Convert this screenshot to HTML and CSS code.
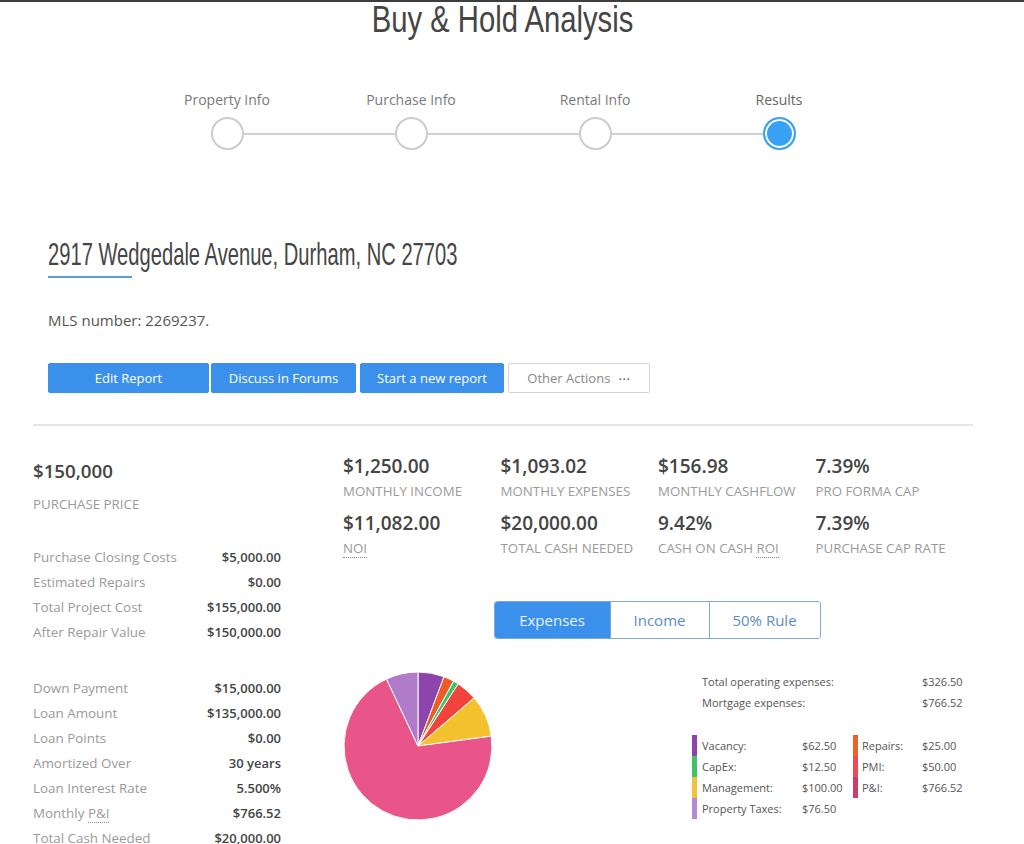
FILE: index.html
```html
<!DOCTYPE html>
<html lang="en">
<head>
<meta charset="utf-8">
<title>Buy &amp; Hold Analysis</title>
<link rel="stylesheet" href="styles.css">
</head>
<body>
<div class="page">
  <h1 class="title"><span class="title-text">Buy &amp; Hold Analysis</span></h1>

  <nav class="stepper">
    <div class="step-labels">
      <span>Property Info</span>
      <span>Purchase Info</span>
      <span>Rental Info</span>
      <span class="current">Results</span>
    </div>
    <div class="step-track">
      <span class="dot"></span><span class="line"></span>
      <span class="dot"></span><span class="line"></span>
      <span class="dot"></span><span class="line"></span>
      <span class="dot active"></span>
    </div>
  </nav>

  <header class="property">
    <h2 class="address"><span class="address-text">2917 Wedgedale Avenue, Durham, NC 27703</span></h2>
    <div class="accent"></div>
    <p class="mls">MLS number: 2269237.</p>
    <div class="actions">
      <button class="btn btn-primary btn-edit">Edit Report</button>
      <button class="btn btn-primary btn-forums">Discuss in Forums</button>
      <button class="btn btn-primary btn-new">Start a new report</button>
      <button class="btn btn-outline">Other Actions <span class="dots">&bull;&bull;&bull;</span></button>
    </div>
  </header>

  <hr class="divider">

  <div class="results">
    <aside class="summary">
      <div class="summary-value">$150,000</div>
      <div class="summary-label">Purchase Price</div>

      <div class="rows rows-first">
        <div class="row"><span class="row-label">Purchase Closing Costs</span><span class="row-value">$5,000.00</span></div>
        <div class="row"><span class="row-label">Estimated Repairs</span><span class="row-value">$0.00</span></div>
        <div class="row"><span class="row-label">Total Project Cost</span><span class="row-value">$155,000.00</span></div>
        <div class="row"><span class="row-label">After Repair Value</span><span class="row-value">$150,000.00</span></div>
      </div>

      <div class="rows rows-second">
        <div class="row"><span class="row-label">Down Payment</span><span class="row-value">$15,000.00</span></div>
        <div class="row"><span class="row-label">Loan Amount</span><span class="row-value">$135,000.00</span></div>
        <div class="row"><span class="row-label">Loan Points</span><span class="row-value">$0.00</span></div>
        <div class="row"><span class="row-label">Amortized Over</span><span class="row-value">30 years</span></div>
        <div class="row"><span class="row-label">Loan Interest Rate</span><span class="row-value">5.500%</span></div>
        <div class="row"><span class="row-label">Monthly <abbr class="abbr">P&amp;I</abbr></span><span class="row-value">$766.52</span></div>
        <div class="row"><span class="row-label">Total Cash Needed</span><span class="row-value">$20,000.00</span></div>
      </div>
    </aside>

    <section class="analysis">
      <div class="metrics">
        <div class="metric"><div class="metric-value">$1,250.00</div><div class="metric-label">Monthly Income</div></div>
        <div class="metric"><div class="metric-value">$1,093.02</div><div class="metric-label">Monthly Expenses</div></div>
        <div class="metric"><div class="metric-value">$156.98</div><div class="metric-label">Monthly Cashflow</div></div>
        <div class="metric"><div class="metric-value">7.39%</div><div class="metric-label">Pro Forma Cap</div></div>
        <div class="metric"><div class="metric-value">$11,082.00</div><div class="metric-label"><abbr class="abbr">NOI</abbr></div></div>
        <div class="metric"><div class="metric-value">$20,000.00</div><div class="metric-label">Total Cash Needed</div></div>
        <div class="metric"><div class="metric-value">9.42%</div><div class="metric-label">Cash on Cash <abbr class="abbr">ROI</abbr></div></div>
        <div class="metric"><div class="metric-value">7.39%</div><div class="metric-label">Purchase Cap Rate</div></div>
      </div>

      <div class="tabs">
        <span class="tab tab-expenses active">Expenses</span>
        <span class="tab tab-income">Income</span>
        <span class="tab tab-rule">50% Rule</span>
      </div>

      <div class="chart-row">
        <svg class="pie" width="150" height="150" viewBox="0 0 150 150">
          <g stroke="#ffffff" stroke-width="1" stroke-linejoin="round">
            <path fill="#8e44ad" d="M75 75 L75 1 A74 74 0 0 1 101.02 5.72 Z"/>
            <path fill="#ee5a2a" d="M75 75 L101.02 5.72 A74 74 0 0 1 110.67 10.17 Z"/>
            <path fill="#3cc468" d="M75 75 L110.67 10.17 A74 74 0 0 1 115.24 12.89 Z"/>
            <path fill="#f2433f" d="M75 75 L115.24 12.89 A74 74 0 0 1 131.20 26.86 Z"/>
            <path fill="#f4c22e" d="M75 75 L131.20 26.86 A74 74 0 0 1 148.34 65.14 Z"/>
            <path fill="#ea5589" d="M75 75 L148.34 65.14 A74 74 0 1 1 43.49 8.04 Z"/>
            <path fill="#b07cc9" d="M75 75 L43.49 8.04 A74 74 0 0 1 75 1 Z"/>
          </g>
        </svg>

        <div class="legend">
          <div class="legend-totals">
            <span>Total operating expenses:</span><span>$326.50</span>
            <span>Mortgage expenses:</span><span>$766.52</span>
          </div>
          <div class="legend-grid">
            <div class="key key-left c-vacancy"><span class="key-name">Vacancy:</span><span>$62.50</span></div>
            <div class="key key-right c-repairs"><span class="key-name">Repairs:</span><span>$25.00</span></div>
            <div class="key key-left c-capex"><span class="key-name">CapEx:</span><span>$12.50</span></div>
            <div class="key key-right c-pmi"><span class="key-name">PMI:</span><span>$50.00</span></div>
            <div class="key key-left c-mgmt"><span class="key-name">Management:</span><span>$100.00</span></div>
            <div class="key key-right c-pi"><span class="key-name">P&amp;I:</span><span>$766.52</span></div>
            <div class="key key-left c-taxes"><span class="key-name">Property Taxes:</span><span>$76.50</span></div>
          </div>
        </div>
      </div>
    </section>
  </div>
</div>
</body>
</html>
```

FILE: styles.css
```css
* { box-sizing: border-box; }

body {
  margin: 0;
  border-top: 2px solid #3d3d3d;
  background: #ffffff;
  color: #444444;
  font-family: "Open Sans", "Noto Sans", sans-serif;
}

.page {
  width: 940px;
  margin-left: 33px;
}

.title {
  margin: 0;
  height: 36px;
  text-align: center;
  font-family: "Liberation Sans", Arial, sans-serif;
  font-weight: normal;
  font-size: 37px;
  line-height: 36px;
  color: #454545;
}
.title-text {
  display: inline-block;
  white-space: nowrap;
  transform: scaleX(0.79);
  transform-origin: center top;
}

/* stepper */
.stepper { margin-top: 52px; }

.step-labels {
  display: grid;
  grid-template-columns: repeat(4, 184px);
  justify-content: center;
  font-size: 14px;
  line-height: 19px;
  color: #7a7a7a;
  text-align: center;
}
.step-labels .current { color: #666666; }

.step-track {
  display: flex;
  align-items: center;
  width: 585px;
  margin: 8px auto 0;
}
.dot {
  flex: none;
  width: 33px;
  height: 33px;
  border: 2px solid #cccccc;
  border-radius: 50%;
  background: #ffffff;
}
.dot.active {
  background: #3aa2f5;
  border-color: #3aa2f5;
  box-shadow: inset 0 0 0 2px #ffffff;
}
.line {
  flex: 1;
  height: 2px;
  background: #cfcfcf;
}

/* property header */
.property {
  margin-top: 84px;
  padding-left: 15px;
}
.address {
  margin: 0;
  font-family: "Liberation Sans", Arial, sans-serif;
  font-weight: normal;
  font-size: 32px;
  line-height: 40px;
  color: #454545;
}
.address-text {
  display: inline-block;
  white-space: nowrap;
  transform: scaleX(0.63);
  transform-origin: left top;
}
.accent {
  width: 84px;
  height: 2px;
  margin-top: 2px;
  background: #5e9fd2;
}
.mls {
  margin: 32px 0 0;
  font-size: 15px;
  line-height: 20px;
  color: #555555;
}

.actions {
  display: flex;
  margin-top: 33px;
}
.btn {
  height: 30px;
  padding: 0;
  border-radius: 2px;
  font-family: "Open Sans", "Noto Sans", sans-serif;
  font-size: 13px;
  line-height: 28px;
  cursor: pointer;
}
.btn-primary {
  border: 1px solid #3a8fe9;
  background: #3b90ec;
  color: #ffffff;
}
.btn-edit { width: 161px; }
.btn-forums { width: 145px; margin-left: 2px; }
.btn-new { width: 144px; margin-left: 4px; }
.btn-outline {
  width: 142px;
  margin-left: 4px;
  border: 1px solid #d4d4d4;
  background: #ffffff;
  color: #888888;
}
.dots {
  margin-left: 5px;
  font-size: 8px;
  letter-spacing: 1px;
  color: #666666;
  vertical-align: 1px;
}

.divider {
  margin: 31px 0 0;
  border: 0;
  border-top: 2px solid #e4e4e4;
}

/* results */
.results {
  display: flex;
  margin-top: 30px;
}

.summary {
  flex: none;
  width: 310px;
  padding-top: 3px;
}
.summary-value {
  font-size: 18.7px;
  line-height: 24px;
  font-weight: 600;
  color: #444444;
}
.summary-label {
  margin-top: 12px;
  font-size: 13.3px;
  line-height: 18px;
  color: #9a9a9a;
  text-transform: uppercase;
}
.rows { width: 248px; }
.rows-first { margin-top: 32px; }
.rows-second { margin-top: 31px; }
.row {
  display: flex;
  justify-content: space-between;
  font-size: 13.4px;
  line-height: 25px;
}
.row-label { color: #9a9a9a; }
.row-value { font-size: 13px; font-weight: 600; color: #444444; }

.abbr {
  text-decoration: none;
  border-bottom: 1px dotted #888888;
}

.analysis {
  flex: none;
  width: 630px;
}
.metrics {
  display: grid;
  grid-template-columns: repeat(4, 1fr);
  row-gap: 11px;
  margin-top: -2px;
}
.metric-value {
  font-size: 19px;
  line-height: 24px;
  font-weight: 600;
  color: #444444;
}
.metric-label {
  margin-top: 4px;
  font-size: 13.3px;
  line-height: 18px;
  color: #9a9a9a;
  text-transform: uppercase;
}

.tabs {
  display: flex;
  width: 327px;
  height: 38px;
  margin: 44px auto 0;
  border: 1px solid #7ea8d6;
  border-radius: 3px;
  overflow: hidden;
  transform: translateX(-1px);
}
.tab {
  display: flex;
  align-items: center;
  justify-content: center;
  font-size: 15px;
  color: #5a8cc6;
  background: #ffffff;
}
.tab + .tab { border-left: 1px solid #7ea8d6; }
.tab.active {
  background: #3b90ec;
  color: #eaf4ff;
}
.tab-expenses { width: 115px; }
.tab-income { width: 99px; }
.tab-rule { flex: 1; }

.chart-row {
  display: flex;
  align-items: flex-start;
  margin-top: 32px;
}
.pie { flex: none; display: block; }

.legend {
  width: 272px;
  margin-left: auto;
  margin-right: 9px;
  font-size: 11px;
  color: #555555;
}
.legend-totals {
  display: grid;
  grid-template-columns: 220px auto;
  padding-left: 10px;
  line-height: 21px;
}
.legend-grid {
  display: grid;
  grid-template-columns: 161px auto;
  margin-top: 22px;
}
.key {
  display: flex;
  height: 21px;
  line-height: 21px;
  border-left: 5px solid #cccccc;
}
.key-left { padding-left: 5px; }
.key-left .key-name { width: 100px; }
.key-right { padding-left: 4px; }
.key-right .key-name { width: 60px; }

.c-vacancy { border-left-color: #8e44ad; }
.c-capex { border-left-color: #3cc468; }
.c-mgmt { border-left-color: #f2c33a; }
.c-taxes { border-left-color: #b48bd0; }
.c-repairs { border-left-color: #ec6228; }
.c-pmi { border-left-color: #ee4a52; }
.c-pi { border-left-color: #d33a6c; }
```
